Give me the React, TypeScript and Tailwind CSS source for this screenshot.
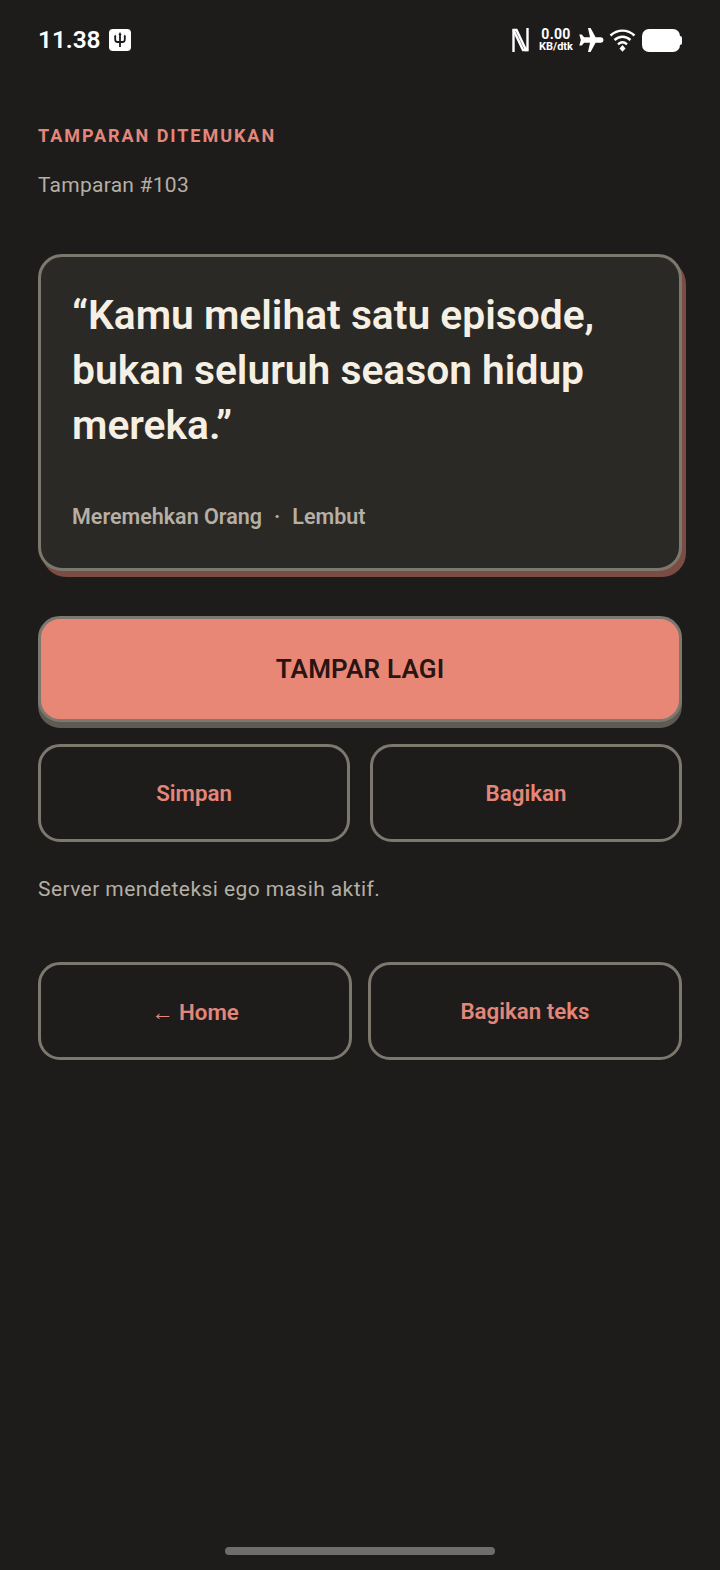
function StatusBar() {
  return (
    <div className="h-[80px] px-[38px] flex items-center justify-between text-white">
      <div className="flex items-center gap-[9px]">
        <span className="text-[24.500px] leading-none font-semibold tracking-[-0.1px]">11.38</span>
        <span className="w-[22px] h-[22px] rounded-[4px] bg-white flex items-center justify-center">
          <svg width="14" height="16" viewBox="0 0 14 16" fill="none" stroke="#1c1b1a" strokeWidth="1.800">
            <path d="M7 2v13M2.200 4v3.500c0 1.600 1.200 2.500 2.400 2.500h4.800c1.200 0 2.400-.9 2.400-2.500V4" />
            <path d="M7 0 5.400 3h3.200zM2.200 2.400 1 4.600h2.400zM11.800 2.400 10.600 4.600H13z" fill="#1c1b1a" stroke="none" />
          </svg>
        </span>
      </div>
      <div className="flex items-center">
        <svg width="17" height="24" viewBox="0 0 17 24" fill="none" stroke="white" strokeWidth="2.400" className="mr-[9px]">
          <path d="M1.500 24V2H4.500L14 22H15.500V0" />
          <path d="M1.500 2 11 22H15.500" />
        </svg>
        <div className="w-[36px] flex flex-col items-center font-bold leading-none mr-[4px]">
          <span className="text-[14px] leading-[13px] tracking-[0.3px]">0.00</span>
          <span className="text-[11px] leading-[12px]">KB/dtk</span>
        </div>
        <svg width="26" height="24" viewBox="0 0 25 24" fill="white" className="mr-[5px]">
          <path d="M9.500 0h2.600l5 9.200h5.200c1.500 0 2.700 1.200 2.700 2.800s-1.200 2.800-2.700 2.800h-5.200l-5 9.200H9.500l2-9.200H5.600L3.300 17.500H.8L2.300 12 .8 6.500h2.500l2.300 2.700h5.900z" />
        </svg>
        <svg width="27" height="23" viewBox="0 0 27 23" fill="none" stroke="white" strokeWidth="2.400" className="mr-[6px]">
          <path d="M1.500 6.500C8.500 0 18.500 0 25.500 6.500M5.500 11c4.800-4.300 11.200-4.300 16 0M9 15.300c2.900-2.500 6.100-2.500 9 0" />
          <path d="M10.500 19.500 13.500 16l3 3.500-3 3.300z" fill="white" stroke="none" />
        </svg>
        <div className="flex items-center">
          <div className="w-[38px] h-[23px] rounded-[7px] bg-white" />
          <div className="w-[2px] h-[9px] rounded-r-[2px] bg-white" />
        </div>
      </div>
    </div>
  )
}

export default function App() {
  return (
    <div className="h-[1570px] bg-[#1d1c1b] font-['Roboto',sans-serif] flex flex-col relative overflow-hidden">
      <StatusBar />
      <div className="px-[38px] flex flex-col">
        <div className="mt-[45px] text-[18px] leading-[22px] font-bold tracking-[1.95px] text-[#e4877a]">TAMPARAN DITEMUKAN</div>
        <div className="mt-[26px] text-[21px] leading-[24px] tracking-[0.25px] text-[#b5afa4]">Tamparan #103</div>

        <div className="mt-[57px] h-[317px] rounded-[24px] border-[3px] border-[#7d786e] bg-[#2a2926] shadow-[4px_6px_0_0_#7a4c43] px-[31px] pt-[31px]">
          <div className="text-[40.750px] leading-[55px] font-semibold text-[#f6f0e4]">
            “Kamu melihat satu episode,<br />bukan seluruh season hidup<br />mereka.”
          </div>
          <div className="mt-[51px] text-[21.500px] leading-[26px] font-semibold text-[#b5afa4] whitespace-pre">Meremehkan Orang<span className="mx-[12px]">·</span>Lembut</div>
        </div>

        <div className="mt-[45px] h-[106px] rounded-[22px] border-[3px] border-[#7d786e] bg-[#e98777] shadow-[0_6px_0_0_#5e5b54] flex items-center justify-center text-[26px] font-semibold tracking-[0.2px] text-[#2a1512]">
          TAMPAR LAGI
        </div>

        <div className="mt-[22px] grid grid-cols-2 gap-[20px]">
          <div className="h-[98px] rounded-[22px] border-[3px] border-[#7d786e] flex items-center justify-center text-[22.300px] font-semibold text-[#e4877a] pt-[2px]">Simpan</div>
          <div className="h-[98px] rounded-[22px] border-[3px] border-[#7d786e] flex items-center justify-center text-[22.300px] font-semibold text-[#e4877a] pt-[2px]">Bagikan</div>
        </div>

        <div className="mt-[34px] text-[21px] leading-[26px] tracking-[0.42px] text-[#b5afa4]">Server mendeteksi ego masih aktif.</div>

        <div className="mt-[60px] grid grid-cols-2 gap-[16px]">
          <div className="h-[98px] rounded-[22px] border-[3px] border-[#7d786e] flex items-center justify-center text-[22.300px] font-semibold text-[#e4877a] pt-[4px]">← Home</div>
          <div className="h-[98px] rounded-[22px] border-[3px] border-[#7d786e] flex items-center justify-center text-[22.300px] font-semibold text-[#e4877a] pt-[2px]">Bagikan teks</div>
        </div>
      </div>
      <div className="absolute bottom-[15px] left-[225px] w-[270px] h-[8px] rounded-full bg-[#6f6d6a]" />
    </div>
  )
}
